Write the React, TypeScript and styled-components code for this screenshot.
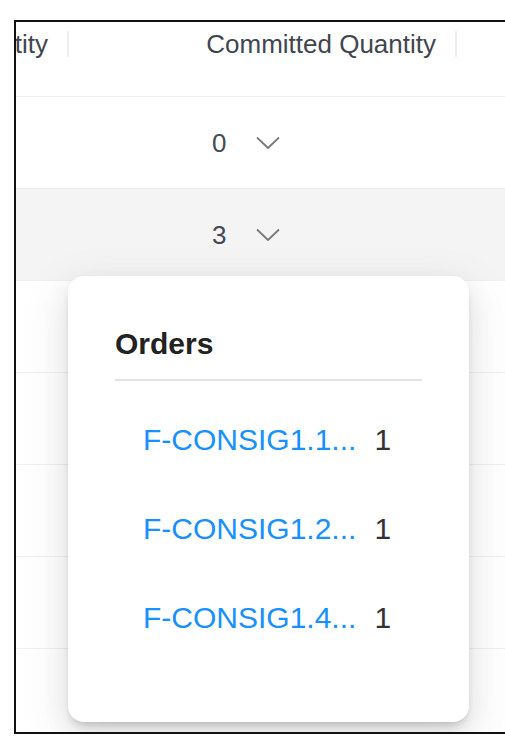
import styled, { createGlobalStyle } from 'styled-components';

const GlobalStyle = createGlobalStyle`
  html, body {
    margin: 0;
    padding: 0;
    background: #ffffff;
    overflow: hidden;
  }
  body {
    font-family: 'Liberation Sans', Arial, sans-serif;
  }
`;

const COLUMNS = [
  { key: 'quantity', title: 'Quantity', width: 53 },
  { key: 'committed', title: 'Committed Quantity', width: 388 },
];

const ROWS = [
  { id: 'r1', committed: 0, active: false },
  { id: 'r2', committed: 3, active: true },
  { id: 'r3', committed: null, active: false },
  { id: 'r4', committed: null, active: false },
  { id: 'r5', committed: null, active: false },
  { id: 'r6', committed: null, active: false },
  { id: 'r7', committed: null, active: false },
];

const ORDERS = [
  { id: 'o1', code: 'F-CONSIG1.1...', qty: 1 },
  { id: 'o2', code: 'F-CONSIG1.2...', qty: 1 },
  { id: 'o3', code: 'F-CONSIG1.4...', qty: 1 },
];

const Chevron = () => (
  <ChevronSvg width="24" height="14" viewBox="0 0 24 14" fill="none">
    <polyline
      points="1.5,2 12,12 22.5,2"
      stroke="#7a7a7a"
      strokeWidth="1.8"
      strokeLinecap="round"
      strokeLinejoin="round"
    />
  </ChevronSvg>
);

export default function App() {
  return (
    <>
      <GlobalStyle />
      <PageStyle>
        <FrameStyle>
          <HeaderRowStyle>
            {COLUMNS.map((col) => (
              <HeaderCellStyle key={col.key} $width={col.width}>
                <HeaderTitleStyle>{col.title}</HeaderTitleStyle>
                <SeparatorStyle />
              </HeaderCellStyle>
            ))}
          </HeaderRowStyle>

          {ROWS.map((row) => (
            <RowStyle key={row.id} $active={row.active}>
              <CellStyle $width={53} />
              <CommittedCellStyle $width={388}>
                {row.committed !== null && (
                  <>
                    <ValueStyle>{row.committed}</ValueStyle>
                    <Chevron />
                  </>
                )}
              </CommittedCellStyle>
            </RowStyle>
          ))}

          <PopoverStyle>
            <PopoverTitleStyle>Orders</PopoverTitleStyle>
            <OrderListStyle>
              {ORDERS.map((order) => (
                <OrderItemStyle key={order.id}>
                  <OrderLinkStyle href="#">{order.code}</OrderLinkStyle>
                  <OrderQtyStyle>{order.qty}</OrderQtyStyle>
                </OrderItemStyle>
              ))}
            </OrderListStyle>
          </PopoverStyle>
        </FrameStyle>
      </PageStyle>
    </>
  );
}

const PageStyle = styled.div`
  width: 100vw;
  height: 100vh;
  overflow: hidden;
  padding: 20px 0 0 14px;
  box-sizing: border-box;
`;

const FrameStyle = styled.div`
  position: relative;
  width: 560px;
  height: 710px;
  border: 2px solid #111111;
  border-right: none;
  overflow: hidden;
  background: #ffffff;
`;

const HeaderRowStyle = styled.div`
  display: flex;
  align-items: flex-start;
  height: 74px;
  border-bottom: 1px solid #f0f0f0;
`;

const HeaderCellStyle = styled.div<{ $width: number }>`
  width: ${({ $width }) => $width}px;
  flex-shrink: 0;
  height: 44px;
  display: flex;
  align-items: center;
  justify-content: flex-end;
  gap: 19px;
`;

const HeaderTitleStyle = styled.span`
  flex-shrink: 0;
  white-space: nowrap;
  font-size: 26px;
  line-height: 30px;
  color: #3f4650;
`;

const SeparatorStyle = styled.span`
  flex-shrink: 0;
  width: 2px;
  height: 26px;
  background: #efefef;
`;

const RowStyle = styled.div<{ $active: boolean }>`
  display: flex;
  height: 91px;
  border-bottom: 1px solid #f0f0f0;
  background: ${({ $active }) => ($active ? '#f4f4f4' : '#ffffff')};
`;

const CellStyle = styled.div<{ $width: number }>`
  width: ${({ $width }) => $width}px;
  flex-shrink: 0;
`;

const CommittedCellStyle = styled(CellStyle)`
  display: flex;
  align-items: center;
  padding-left: 143px;
  box-sizing: border-box;
`;

const ValueStyle = styled.span`
  font-size: 26px;
  line-height: 30px;
  color: #434a54;
`;

const ChevronSvg = styled.svg`
  margin-left: 30px;
  display: block;
`;

const PopoverStyle = styled.div`
  position: absolute;
  left: 52px;
  top: 254px;
  z-index: 2;
  width: 401px;
  height: 446px;
  box-sizing: border-box;
  padding: 50px 47px 0;
  background: #ffffff;
  border-radius: 16px;
  box-shadow:
    0 10px 28px rgba(0, 0, 0, 0.09),
    0 6px 10px -4px rgba(0, 0, 0, 0.22),
    0 16px 48px 12px rgba(0, 0, 0, 0.05);
`;

const PopoverTitleStyle = styled.div`
  font-size: 30px;
  line-height: 36px;
  font-weight: 700;
  color: #222222;
  padding-bottom: 17px;
  border-bottom: 2px solid #e2e2e2;
`;

const OrderListStyle = styled.div`
  display: flex;
  flex-direction: column;
  gap: 53px;
  padding: 41px 0 0 28px;
`;

const OrderItemStyle = styled.div`
  display: flex;
  align-items: center;
  gap: 18px;
  font-size: 30px;
  line-height: 36px;
`;

const OrderLinkStyle = styled.a`
  color: #1890ff;
  text-decoration: none;
`;

const OrderQtyStyle = styled.span`
  color: #333333;
`;
